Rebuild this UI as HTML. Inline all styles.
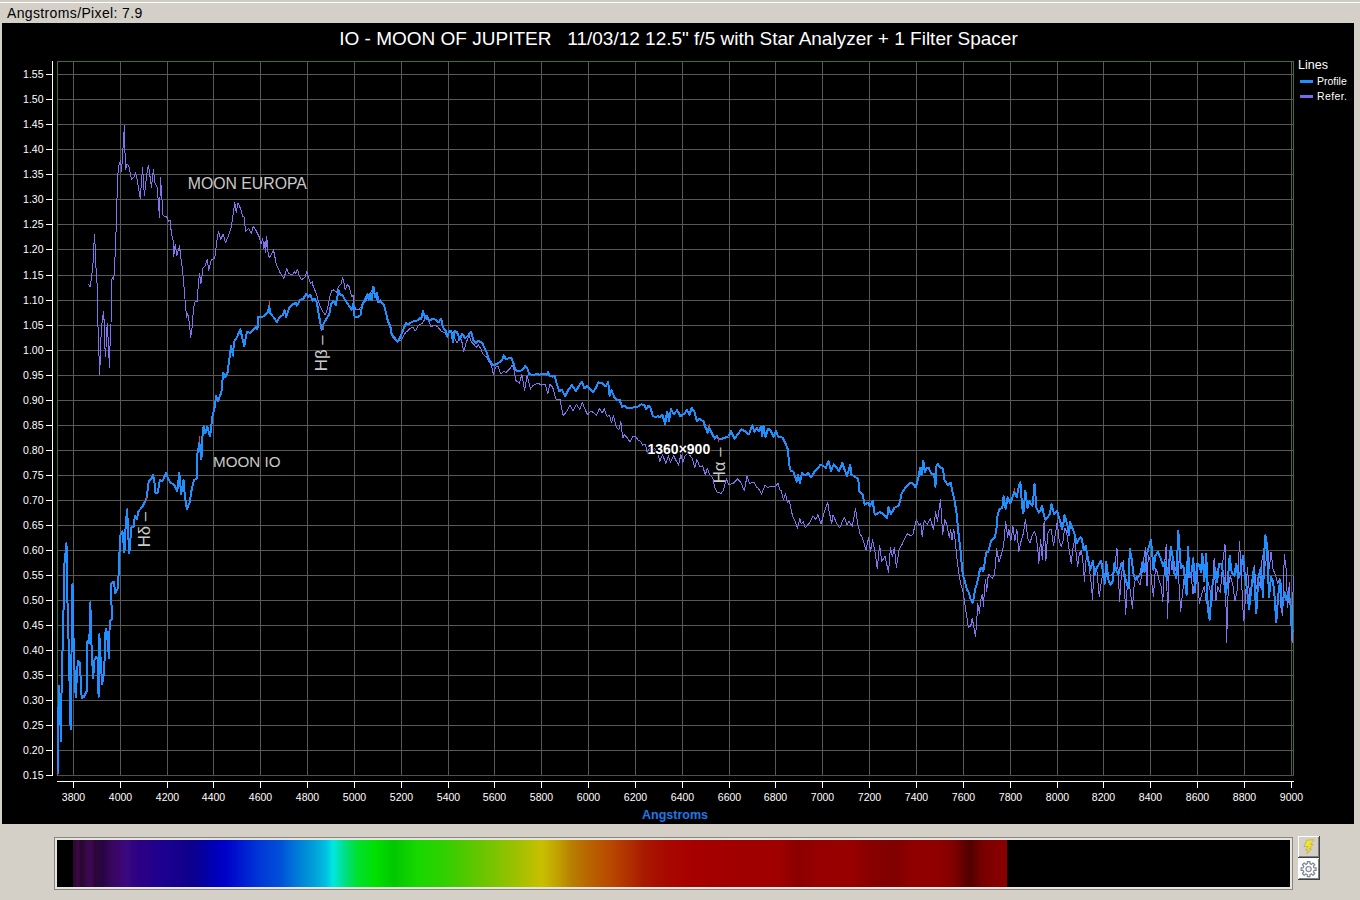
<!DOCTYPE html>
<html><head><meta charset="utf-8"><title>Spectrum</title>
<style>
html,body{margin:0;padding:0;}
body{width:1360px;height:900px;overflow:hidden;background:#d4d0c8;font-family:"Liberation Sans",sans-serif;position:relative;}
#topline{position:absolute;left:0;top:0;width:1360px;height:2px;background:#cfcbc3;}
#topwhite{position:absolute;left:0;top:2px;width:1360px;height:1px;background:#ffffff;}
#hdr{position:absolute;left:7px;top:4.5px;font-size:14px;letter-spacing:0.36px;line-height:16px;color:#000;white-space:nowrap;}
#chart{position:absolute;left:2px;top:23px;width:1352px;height:801px;background:#000;}
svg{position:absolute;left:0;top:0;}
.t{font-family:"Liberation Sans",sans-serif;fill:#fff;}
</style></head><body>
<div id="topline"></div><div id="topwhite"></div>
<div id="hdr">Angstroms/Pixel: 7.9</div>
<div id="chart"></div>
<svg width="1360" height="900" viewBox="0 0 1360 900">

<g shape-rendering="crispEdges" stroke="#585858" stroke-width="1">
<line x1="73.5" y1="61.5" x2="73.5" y2="775.5"/>
<line x1="120.5" y1="61.5" x2="120.5" y2="775.5"/>
<line x1="167.5" y1="61.5" x2="167.5" y2="775.5"/>
<line x1="213.5" y1="61.5" x2="213.5" y2="775.5"/>
<line x1="260.5" y1="61.5" x2="260.5" y2="775.5"/>
<line x1="307.5" y1="61.5" x2="307.5" y2="775.5"/>
<line x1="354.5" y1="61.5" x2="354.5" y2="775.5"/>
<line x1="401.5" y1="61.5" x2="401.5" y2="775.5"/>
<line x1="448.5" y1="61.5" x2="448.5" y2="775.5"/>
<line x1="494.5" y1="61.5" x2="494.5" y2="775.5"/>
<line x1="541.5" y1="61.5" x2="541.5" y2="775.5"/>
<line x1="588.5" y1="61.5" x2="588.5" y2="775.5"/>
<line x1="635.5" y1="61.5" x2="635.5" y2="775.5"/>
<line x1="682.5" y1="61.5" x2="682.5" y2="775.5"/>
<line x1="729.5" y1="61.5" x2="729.5" y2="775.5"/>
<line x1="775.5" y1="61.5" x2="775.5" y2="775.5"/>
<line x1="822.5" y1="61.5" x2="822.5" y2="775.5"/>
<line x1="869.5" y1="61.5" x2="869.5" y2="775.5"/>
<line x1="916.5" y1="61.5" x2="916.5" y2="775.5"/>
<line x1="963.5" y1="61.5" x2="963.5" y2="775.5"/>
<line x1="1010.5" y1="61.5" x2="1010.5" y2="775.5"/>
<line x1="1057.5" y1="61.5" x2="1057.5" y2="775.5"/>
<line x1="1103.5" y1="61.5" x2="1103.5" y2="775.5"/>
<line x1="1150.5" y1="61.5" x2="1150.5" y2="775.5"/>
<line x1="1197.5" y1="61.5" x2="1197.5" y2="775.5"/>
<line x1="1244.5" y1="61.5" x2="1244.5" y2="775.5"/>
<line x1="1291.5" y1="61.5" x2="1291.5" y2="775.5"/>
<line x1="57.5" y1="775.5" x2="1293.5" y2="775.5"/>
<line x1="57.5" y1="750.5" x2="1293.5" y2="750.5"/>
<line x1="57.5" y1="725.5" x2="1293.5" y2="725.5"/>
<line x1="57.5" y1="700.5" x2="1293.5" y2="700.5"/>
<line x1="57.5" y1="675.5" x2="1293.5" y2="675.5"/>
<line x1="57.5" y1="650.5" x2="1293.5" y2="650.5"/>
<line x1="57.5" y1="625.5" x2="1293.5" y2="625.5"/>
<line x1="57.5" y1="600.5" x2="1293.5" y2="600.5"/>
<line x1="57.5" y1="575.5" x2="1293.5" y2="575.5"/>
<line x1="57.5" y1="550.5" x2="1293.5" y2="550.5"/>
<line x1="57.5" y1="525.5" x2="1293.5" y2="525.5"/>
<line x1="57.5" y1="500.5" x2="1293.5" y2="500.5"/>
<line x1="57.5" y1="475.5" x2="1293.5" y2="475.5"/>
<line x1="57.5" y1="450.5" x2="1293.5" y2="450.5"/>
<line x1="57.5" y1="425.5" x2="1293.5" y2="425.5"/>
<line x1="57.5" y1="400.5" x2="1293.5" y2="400.5"/>
<line x1="57.5" y1="375.5" x2="1293.5" y2="375.5"/>
<line x1="57.5" y1="350.5" x2="1293.5" y2="350.5"/>
<line x1="57.5" y1="325.5" x2="1293.5" y2="325.5"/>
<line x1="57.5" y1="300.5" x2="1293.5" y2="300.5"/>
<line x1="57.5" y1="275.5" x2="1293.5" y2="275.5"/>
<line x1="57.5" y1="249.5" x2="1293.5" y2="249.5"/>
<line x1="57.5" y1="224.5" x2="1293.5" y2="224.5"/>
<line x1="57.5" y1="199.5" x2="1293.5" y2="199.5"/>
<line x1="57.5" y1="174.5" x2="1293.5" y2="174.5"/>
<line x1="57.5" y1="149.5" x2="1293.5" y2="149.5"/>
<line x1="57.5" y1="124.5" x2="1293.5" y2="124.5"/>
<line x1="57.5" y1="99.5" x2="1293.5" y2="99.5"/>
<line x1="57.5" y1="74.5" x2="1293.5" y2="74.5"/>
</g>
<rect x="57.5" y="61.5" width="1236.0" height="714.0" fill="none" stroke="#2e762e" stroke-width="1" shape-rendering="crispEdges"/>
<line x1="57.5" y1="775.5" x2="1293.5" y2="775.5" stroke="#505050" shape-rendering="crispEdges"/>
<g shape-rendering="crispEdges" stroke="#fff" stroke-width="1">
<line x1="52.5" y1="61" x2="52.5" y2="776"/>
<line x1="57" y1="781.5" x2="1294" y2="781.5"/>
<line x1="73.5" y1="781" x2="73.5" y2="788"/>
<line x1="120.5" y1="781" x2="120.5" y2="788"/>
<line x1="167.5" y1="781" x2="167.5" y2="788"/>
<line x1="213.5" y1="781" x2="213.5" y2="788"/>
<line x1="260.5" y1="781" x2="260.5" y2="788"/>
<line x1="307.5" y1="781" x2="307.5" y2="788"/>
<line x1="354.5" y1="781" x2="354.5" y2="788"/>
<line x1="401.5" y1="781" x2="401.5" y2="788"/>
<line x1="448.5" y1="781" x2="448.5" y2="788"/>
<line x1="494.5" y1="781" x2="494.5" y2="788"/>
<line x1="541.5" y1="781" x2="541.5" y2="788"/>
<line x1="588.5" y1="781" x2="588.5" y2="788"/>
<line x1="635.5" y1="781" x2="635.5" y2="788"/>
<line x1="682.5" y1="781" x2="682.5" y2="788"/>
<line x1="729.5" y1="781" x2="729.5" y2="788"/>
<line x1="775.5" y1="781" x2="775.5" y2="788"/>
<line x1="822.5" y1="781" x2="822.5" y2="788"/>
<line x1="869.5" y1="781" x2="869.5" y2="788"/>
<line x1="916.5" y1="781" x2="916.5" y2="788"/>
<line x1="963.5" y1="781" x2="963.5" y2="788"/>
<line x1="1010.5" y1="781" x2="1010.5" y2="788"/>
<line x1="1057.5" y1="781" x2="1057.5" y2="788"/>
<line x1="1103.5" y1="781" x2="1103.5" y2="788"/>
<line x1="1150.5" y1="781" x2="1150.5" y2="788"/>
<line x1="1197.5" y1="781" x2="1197.5" y2="788"/>
<line x1="1244.5" y1="781" x2="1244.5" y2="788"/>
<line x1="1291.5" y1="781" x2="1291.5" y2="788"/>
<line x1="46" y1="775.5" x2="53" y2="775.5"/>
<line x1="46" y1="750.5" x2="53" y2="750.5"/>
<line x1="46" y1="725.5" x2="53" y2="725.5"/>
<line x1="46" y1="700.5" x2="53" y2="700.5"/>
<line x1="46" y1="675.5" x2="53" y2="675.5"/>
<line x1="46" y1="650.5" x2="53" y2="650.5"/>
<line x1="46" y1="625.5" x2="53" y2="625.5"/>
<line x1="46" y1="600.5" x2="53" y2="600.5"/>
<line x1="46" y1="575.5" x2="53" y2="575.5"/>
<line x1="46" y1="550.5" x2="53" y2="550.5"/>
<line x1="46" y1="525.5" x2="53" y2="525.5"/>
<line x1="46" y1="500.5" x2="53" y2="500.5"/>
<line x1="46" y1="475.5" x2="53" y2="475.5"/>
<line x1="46" y1="450.5" x2="53" y2="450.5"/>
<line x1="46" y1="425.5" x2="53" y2="425.5"/>
<line x1="46" y1="400.5" x2="53" y2="400.5"/>
<line x1="46" y1="375.5" x2="53" y2="375.5"/>
<line x1="46" y1="350.5" x2="53" y2="350.5"/>
<line x1="46" y1="325.5" x2="53" y2="325.5"/>
<line x1="46" y1="300.5" x2="53" y2="300.5"/>
<line x1="46" y1="275.5" x2="53" y2="275.5"/>
<line x1="46" y1="249.5" x2="53" y2="249.5"/>
<line x1="46" y1="224.5" x2="53" y2="224.5"/>
<line x1="46" y1="199.5" x2="53" y2="199.5"/>
<line x1="46" y1="174.5" x2="53" y2="174.5"/>
<line x1="46" y1="149.5" x2="53" y2="149.5"/>
<line x1="46" y1="124.5" x2="53" y2="124.5"/>
<line x1="46" y1="99.5" x2="53" y2="99.5"/>
<line x1="46" y1="74.5" x2="53" y2="74.5"/>
</g>
<g class="t" font-size="10.5" text-anchor="middle">
<text x="73.5" y="801">3800</text>
<text x="120.5" y="801">4000</text>
<text x="167.5" y="801">4200</text>
<text x="213.5" y="801">4400</text>
<text x="260.5" y="801">4600</text>
<text x="307.5" y="801">4800</text>
<text x="354.5" y="801">5000</text>
<text x="401.5" y="801">5200</text>
<text x="448.5" y="801">5400</text>
<text x="494.5" y="801">5600</text>
<text x="541.5" y="801">5800</text>
<text x="588.5" y="801">6000</text>
<text x="635.5" y="801">6200</text>
<text x="682.5" y="801">6400</text>
<text x="729.5" y="801">6600</text>
<text x="775.5" y="801">6800</text>
<text x="822.5" y="801">7000</text>
<text x="869.5" y="801">7200</text>
<text x="916.5" y="801">7400</text>
<text x="963.5" y="801">7600</text>
<text x="1010.5" y="801">7800</text>
<text x="1057.5" y="801">8000</text>
<text x="1103.5" y="801">8200</text>
<text x="1150.5" y="801">8400</text>
<text x="1197.5" y="801">8600</text>
<text x="1244.5" y="801">8800</text>
<text x="1291.5" y="801">9000</text>
</g>
<g class="t" font-size="10.5" text-anchor="end">
<text x="43.5" y="779.0">0.15</text>
<text x="43.5" y="754.0">0.20</text>
<text x="43.5" y="729.0">0.25</text>
<text x="43.5" y="704.0">0.30</text>
<text x="43.5" y="679.0">0.35</text>
<text x="43.5" y="654.0">0.40</text>
<text x="43.5" y="629.0">0.45</text>
<text x="43.5" y="604.0">0.50</text>
<text x="43.5" y="579.0">0.55</text>
<text x="43.5" y="554.0">0.60</text>
<text x="43.5" y="529.0">0.65</text>
<text x="43.5" y="504.0">0.70</text>
<text x="43.5" y="479.0">0.75</text>
<text x="43.5" y="454.0">0.80</text>
<text x="43.5" y="429.0">0.85</text>
<text x="43.5" y="404.0">0.90</text>
<text x="43.5" y="379.0">0.95</text>
<text x="43.5" y="354.0">1.00</text>
<text x="43.5" y="329.0">1.05</text>
<text x="43.5" y="304.0">1.10</text>
<text x="43.5" y="279.0">1.15</text>
<text x="43.5" y="253.0">1.20</text>
<text x="43.5" y="228.0">1.25</text>
<text x="43.5" y="203.0">1.30</text>
<text x="43.5" y="178.0">1.35</text>
<text x="43.5" y="153.0">1.40</text>
<text x="43.5" y="128.0">1.45</text>
<text x="43.5" y="103.0">1.50</text>
<text x="43.5" y="78.0">1.55</text>
</g>
<text class="t" x="678.5" y="44.7" font-size="19" text-anchor="middle" xml:space="preserve" style="white-space:pre">IO - MOON OF JUPITER   11/03/12 12.5" f/5 with Star Analyzer + 1 Filter Spacer</text>
<text x="675" y="819" font-size="12.5" font-weight="bold" text-anchor="middle" fill="#1e78e6" font-family="Liberation Sans, sans-serif">Angstroms</text>
<text class="t" x="1298" y="69" font-size="12.5">Lines</text>
<rect x="1300" y="80" width="13" height="3" fill="#1e90ff"/>
<text class="t" x="1317" y="85" font-size="10.5">Profile</text>
<rect x="1300" y="95" width="13" height="3" fill="#7b68ee"/>
<text class="t" x="1317" y="100" font-size="10.5" letter-spacing="0.4">Refer.</text>
<g font-family="Liberation Sans, sans-serif" fill="#cacaca" font-size="15.5">
<text x="187.8" y="189" font-size="15.8">MOON EUROPA</text>
<text x="213" y="466.7" font-size="15.2">MOON IO</text>
<text font-size="16.8" transform="translate(326.9,371.2) rotate(-90)">H&#946; &#8211;</text>
<text font-size="16.8" transform="translate(150,547.3) rotate(-90)">H&#948; &#8211;</text>
<text font-size="16.8" transform="translate(725.3,483.3) rotate(-90)">H&#945; &#8211;</text>
</g>
<path d="M88.6,284.2 L90.3,286.9 L91.8,275.4 L93.0,263.6 L93.9,245.3 L94.5,234.2 L95.1,245.9 L95.3,264.2 L96.5,270.7 L97.3,289.5 L97.7,318.3 L98.9,350.0 L99.4,374.8 L100.4,359.5 L100.9,339.5 L101.8,324.2 L102.7,317.1 L103.6,311.2 L104.2,323.0 L104.7,344.2 L105.6,356.5 L106.5,337.1 L107.2,323.0 L107.9,334.8 L108.9,356.0 L109.5,367.7 L110.0,346.5 L111.0,325.3 L111.2,304.1 L111.5,280.1 L113.0,277.1 L113.8,279.5 L114.8,264.2 L115.7,234.2 L116.9,224.7 L117.1,180.7 L118.9,165.4 L120.6,160.9 L121.6,171.2 L123.6,138.3 L124.4,125.9 L124.9,148.9 L125.5,169.5 L127.1,163.9 L128.9,166.5 L131.5,179.3 L134.2,176.9 L135.5,172.8 L137.1,178.9 L140.2,198.6 L142.6,167.5 L144.4,195.7 L146.6,176.0 L148.4,165.1 L151.5,187.1 L153.4,169.2 L155.0,183.0 L157.2,187.1 L159.5,217.7 L160.5,177.4 L161.4,191.3 L163.1,215.9 L166.6,216.5 L168.4,221.2 L170.1,220.6 L171.5,234.2 L173.1,240.0 L173.7,256.5 L175.2,244.2 L176.9,255.4 L179.5,245.9 L180.7,256.5 L182.5,269.5 L184.0,287.2 L186.0,311.2 L186.6,317.7 L187.8,313.6 L189.2,321.8 L190.1,331.2 L190.6,337.7 L191.3,333.6 L192.5,324.2 L193.4,308.8 L194.9,301.8 L197.2,301.8 L198.4,282.4 L199.6,273.6 L201.0,283.6 L203.1,267.7 L205.5,265.4 L207.2,258.9 L208.7,270.1 L211.3,260.1 L214.3,258.3 L215.0,255.7 L216.8,241.5 L218.5,231.5 L220.7,239.8 L223.0,233.9 L225.6,242.7 L228.5,235.6 L231.5,226.2 L233.3,212.7 L234.8,202.1 L236.2,212.7 L238.0,203.3 L240.3,208.0 L242.7,216.2 L243.9,216.2 L245.6,231.5 L248.6,228.6 L251.5,233.3 L253.3,226.2 L256.2,230.9 L259.2,236.8 L260.9,243.9 L262.7,238.6 L263.9,248.6 L265.1,241.5 L265.6,252.1 L266.8,236.2 L267.4,248.6 L269.2,257.4 L271.5,254.5 L273.5,249.8 L275.1,258.0 L276.2,263.9 L278.6,269.2 L280.4,273.3 L283.9,278.6 L286.6,268.6 L288.6,273.3 L292.1,275.1 L294.5,271.6 L295.7,273.9 L297.4,269.2 L299.2,275.7 L301.6,279.8 L305.1,276.9 L306.9,271.6 L308.6,278.0 L310.4,283.4 L312.2,281.6 L313.3,286.8 L316.3,293.3 L319.2,303.9 L322.2,310.4 L325.1,315.1 L327.5,308.6 L329.8,296.8 L331.6,290.9 L334.0,289.7 L336.3,292.7 L338.7,286.2 L341.0,284.4 L342.6,277.4 L344.6,285.6 L345.1,289.7 L347.5,284.4 L349.3,286.8 L351.6,296.8 L353.2,295.6 L354.0,305.0 L355.7,309.2 L358.7,309.8 L362.2,305.6 L366.3,300.3 L369.9,293.3 L373.4,288.6 L375.0,293.2 L377.6,302.5 L380.3,299.9 L384.3,306.5 L387.6,319.7 L390.9,326.3 L392.2,334.3 L394.9,336.9 L397.5,342.2 L401.5,339.6 L405.4,332.9 L409.4,329.0 L412.7,327.0 L415.4,331.0 L418.0,325.7 L422.6,323.0 L425.3,318.4 L427.9,319.7 L431.2,327.0 L433.9,325.0 L437.2,326.3 L441.8,331.6 L445.1,332.9 L447.1,337.6 L449.1,332.9 L452.4,332.9 L454.4,338.2 L457.1,342.9 L459.7,336.9 L461.7,340.9 L463.7,351.5 L466.3,342.2 L469.0,335.6 L471.6,342.2 L474.3,344.8 L476.2,347.5 L478.2,344.8 L480.9,348.8 L482.9,354.1 L486.2,356.8 L488.8,361.4 L491.5,365.4 L493.4,374.6 L495.4,367.3 L498.1,366.0 L500.7,374.0 L504.0,371.3 L506.0,372.6 L510.0,368.7 L512.0,364.7 L514.0,370.0 L515.9,380.6 L519.3,383.2 L521.9,374.6 L524.6,390.5 L527.2,375.3 L530.5,389.2 L532.5,385.9 L537.8,383.2 L541.8,385.2 L545.1,383.9 L547.7,393.8 L550.0,384.4 L552.6,387.1 L556.0,399.0 L559.9,399.0 L561.2,405.6 L563.2,415.5 L567.2,410.9 L569.9,404.9 L573.2,410.9 L576.5,404.3 L579.8,409.6 L582.4,402.3 L585.1,409.6 L587.7,414.8 L591.0,410.9 L593.7,412.9 L596.3,415.5 L599.6,408.2 L602.3,412.9 L604.3,408.9 L606.9,416.2 L609.6,415.5 L611.5,422.8 L613.5,415.5 L616.2,426.8 L618.8,430.1 L620.8,421.5 L622.8,438.0 L624.1,434.7 L626.8,437.3 L630.1,442.0 L632.7,436.7 L635.4,436.0 L638.0,440.0 L640.7,441.3 L642.6,445.3 L645.3,444.0 L647.3,453.2 L649.3,448.0 L651.9,451.2 L654.6,448.6 L657.9,453.2 L659.8,461.2 L662.5,454.6 L665.8,463.2 L668.4,455.9 L670.4,462.5 L673.7,455.9 L675.7,459.8 L678.4,465.1 L681.0,454.6 L683.0,462.5 L685.0,455.9 L688.3,453.2 L692.3,458.5 L694.9,467.8 L696.9,459.8 L700.0,466.9 L702.6,465.6 L705.3,474.9 L707.3,468.2 L709.9,474.9 L712.6,477.5 L714.6,486.8 L717.2,492.1 L721.2,493.4 L723.2,490.7 L726.5,478.8 L728.5,484.8 L733.1,483.5 L737.7,478.8 L741.0,482.8 L744.3,490.7 L747.0,476.2 L749.6,483.5 L754.3,482.1 L756.2,486.8 L758.2,488.1 L761.5,494.0 L764.9,485.4 L767.5,487.4 L771.5,486.1 L775.4,486.8 L778.1,482.8 L779.4,489.4 L781.4,490.7 L783.4,500.0 L785.4,493.4 L787.3,502.6 L789.3,500.0 L791.3,510.6 L792.6,515.9 L795.3,521.2 L797.3,528.4 L799.9,518.5 L801.2,523.8 L803.2,521.8 L805.2,527.8 L809.8,522.5 L813.2,515.9 L815.8,519.8 L817.8,514.6 L821.1,523.8 L824.4,511.9 L827.7,502.6 L829.0,510.6 L831.7,523.8 L833.0,514.6 L836.3,522.5 L839.6,527.8 L844.3,517.2 L846.9,525.1 L848.9,521.2 L852.2,526.5 L855.5,508.6 L857.5,522.5 L860.0,533.7 L862.6,538.4 L866.0,550.3 L868.6,537.7 L870.6,551.6 L872.6,539.7 L875.2,552.9 L877.2,568.8 L879.6,545.0 L881.8,561.5 L885.1,556.2 L888.5,572.8 L890.4,547.6 L892.4,556.9 L894.4,547.6 L896.4,567.5 L899.0,550.3 L902.4,543.7 L905.0,537.7 L907.6,533.7 L910.3,535.7 L912.9,534.4 L916.2,519.8 L918.9,524.5 L920.9,523.8 L922.2,537.1 L924.2,520.5 L927.5,524.5 L930.1,518.5 L933.5,529.1 L935.7,511.9 L937.4,521.2 L940.5,500.0 L942.7,534.4 L944.7,519.8 L946.7,523.8 L949.3,537.1 L950.7,529.1 L952.0,539.7 L953.7,529.1 L955.3,541.0 L956.7,556.1 L958.9,573.9 L961.1,585.0 L963.3,592.8 L965.0,605.0 L966.7,616.1 L968.3,627.2 L970.6,626.7 L972.2,618.3 L973.9,627.2 L975.3,636.1 L976.7,625.0 L977.2,610.6 L977.8,603.9 L979.4,613.9 L980.6,600.6 L982.2,593.9 L983.6,606.1 L984.4,589.4 L985.6,579.4 L986.7,591.7 L987.8,578.3 L988.9,574.4 L992.2,578.3 L994.4,575.0 L995.6,562.8 L996.6,548.3 L999.0,562.2 L1001.6,553.6 L1003.6,546.3 L1005.6,521.2 L1007.6,537.1 L1008.9,529.1 L1010.9,541.0 L1012.9,526.5 L1014.8,541.0 L1016.8,529.1 L1018.8,551.6 L1020.8,542.3 L1023.4,533.1 L1025.4,519.8 L1028.1,539.7 L1030.0,542.7 L1032.4,535.1 L1034.1,531.5 L1035.9,535.1 L1037.7,548.0 L1038.8,563.3 L1040.6,539.8 L1042.4,559.8 L1044.1,520.9 L1045.9,561.0 L1047.7,533.9 L1049.4,529.8 L1051.2,529.8 L1053.6,545.7 L1055.9,530.4 L1057.3,520.9 L1058.9,538.6 L1061.2,546.8 L1063.0,541.0 L1064.7,528.0 L1066.5,531.5 L1068.9,548.0 L1071.2,563.3 L1073.0,548.0 L1074.8,539.8 L1076.5,556.3 L1077.7,566.9 L1079.5,552.7 L1080.0,555.5 L1081.3,550.4 L1082.8,560.7 L1084.5,581.1 L1085.7,560.7 L1087.7,555.5 L1089.6,570.9 L1091.5,586.2 L1092.5,599.6 L1093.8,573.4 L1096.6,567.0 L1099.2,596.4 L1101.1,583.6 L1103.0,572.1 L1104.9,584.9 L1106.8,572.1 L1110.0,576.0 L1112.6,573.4 L1115.1,563.2 L1117.0,548.5 L1118.3,574.7 L1119.6,601.5 L1120.9,581.1 L1123.2,560.7 L1124.7,591.3 L1125.7,614.3 L1127.0,590.0 L1128.5,578.5 L1130.4,591.3 L1132.4,608.5 L1134.3,583.6 L1136.2,576.0 L1138.1,581.1 L1140.0,584.9 L1141.9,573.4 L1143.9,558.1 L1145.5,547.9 L1147.0,586.2 L1148.3,555.5 L1150.0,559.4 L1151.5,581.1 L1153.4,596.4 L1155.4,568.3 L1157.3,572.1 L1159.2,581.1 L1161.1,586.2 L1162.8,601.5 L1164.3,568.3 L1166.2,544.7 L1167.5,618.8 L1168.8,578.5 L1170.4,555.5 L1172.0,569.6 L1173.9,560.7 L1175.8,570.9 L1177.7,553.0 L1179.0,583.6 L1180.6,611.7 L1182.2,596.4 L1184.1,578.5 L1185.0,578.3 L1187.0,570.3 L1189.0,578.3 L1191.0,573.0 L1193.0,594.3 L1195.0,578.3 L1197.0,566.3 L1199.4,603.7 L1201.7,594.3 L1204.3,586.3 L1206.3,603.7 L1208.3,582.3 L1210.3,591.7 L1212.3,601.0 L1214.1,558.3 L1215.9,601.0 L1217.7,586.3 L1220.3,593.0 L1223.0,559.7 L1225.0,543.7 L1226.6,643.0 L1228.3,586.3 L1230.3,575.7 L1233.0,586.3 L1235.0,601.0 L1237.7,587.7 L1239.4,541.7 L1241.0,565.0 L1242.6,605.0 L1243.9,621.0 L1245.7,594.3 L1247.4,567.7 L1249.0,587.7 L1250.3,599.7 L1252.3,582.3 L1254.3,565.0 L1256.3,589.0 L1258.3,578.3 L1260.3,587.7 L1262.3,555.7 L1264.3,569.0 L1266.3,559.7 L1267.9,549.0 L1269.3,569.0 L1271.0,551.7 L1273.0,569.0 L1275.7,575.7 L1277.7,583.7 L1279.7,578.3 L1281.0,607.7 L1282.6,615.7 L1284.3,554.3 L1286.1,569.0 L1287.7,607.7 L1289.3,582.3 L1291.0,626.3 L1292.1,642.3 L1293.3,575.7" fill="none" stroke="#8272f0" stroke-width="1" stroke-linejoin="round" shape-rendering="crispEdges"/>
<path d="M57.6,774.4 L58.0,730.0 L59.0,685.6 L61.1,741.1 L61.8,660.0 L63.2,643.3 L63.9,569.7 L66.4,543.3 L67.4,568.3 L67.4,598.9 L68.8,650.3 L70.6,729.3 L71.5,654.4 L72.5,584.3 L73.3,630.8 L74.3,665.0 L75.7,697.4 L77.8,660.6 L79.5,662.0 L80.6,677.2 L81.7,698.1 L84.0,696.7 L86.8,691.1 L87.5,640.6 L89.3,643.0 L90.3,602.4 L91.4,641.9 L93.1,678.6 L94.4,660.0 L95.8,657.2 L97.5,658.0 L98.6,696.7 L99.3,634.3 L100.3,653.1 L102.1,684.2 L103.5,675.8 L104.9,655.0 L105.6,628.8 L106.9,632.2 L109.0,657.9 L109.7,621.1 L111.8,619.7 L111.1,583.6 L113.9,581.5 L115.3,593.3 L118.1,587.8 L118.9,565.0 L120.3,535.8 L122.4,531.0 L124.4,552.5 L125.8,523.3 L127.2,509.4 L127.9,528.9 L129.3,553.2 L131.4,527.5 L133.5,526.8 L134.9,515.7 L136.9,519.2 L138.3,511.5 L142.5,506.7 L146.4,499.0 L148.8,481.0 L151.5,478.9 L152.9,474.7 L154.3,480.3 L155.3,492.8 L157.5,493.5 L159.9,480.3 L162.6,481.0 L166.1,472.6 L168.2,478.9 L170.3,482.4 L174.4,485.1 L177.2,491.4 L179.3,472.6 L181.1,494.2 L183.5,480.3 L184.9,496.9 L186.9,508.8 L189.7,502.5 L191.8,488.6 L193.9,480.3 L196.7,478.2 L197.4,453.9 L199.4,442.8 L201.4,459.4 L202.5,435.8 L203.6,426.1 L205.3,433.1 L207.4,426.8 L210.1,436.5 L212.2,417.8 L215.0,405.3 L216.1,396.3 L217.8,401.1 L221.3,392.8 L223.3,372.6 L225.0,377.5 L227.5,372.6 L229.6,357.4 L230.9,346.3 L233.2,355.7 L233.8,342.1 L236.8,337.4 L240.3,329.2 L244.2,346.3 L246.8,332.1 L250.3,332.7 L256.2,326.8 L257.4,329.2 L258.3,316.8 L262.7,316.8 L268.0,312.1 L269.2,305.6 L270.3,313.3 L273.3,316.8 L276.8,322.1 L279.8,316.8 L282.7,315.1 L284.5,309.8 L286.2,316.8 L289.2,308.0 L292.7,304.5 L295.7,302.7 L296.8,305.6 L300.4,299.7 L303.3,298.6 L306.3,293.9 L308.0,296.8 L310.4,295.0 L312.7,300.9 L314.5,298.6 L316.9,302.7 L319.2,316.8 L321.6,329.8 L323.4,324.5 L325.1,320.9 L329.2,314.5 L331.0,303.9 L333.4,300.9 L335.7,305.0 L338.7,290.3 L339.8,294.4 L342.2,295.0 L344.0,298.0 L351.6,309.8 L353.4,303.9 L354.6,316.8 L356.9,317.4 L360.5,315.1 L362.2,305.0 L367.5,294.4 L368.7,299.7 L370.5,294.4 L371.6,300.3 L373.4,286.8 L375.2,296.8 L377.0,292.6 L378.3,302.5 L381.0,301.8 L384.3,305.8 L388.2,322.4 L390.2,325.7 L391.5,334.3 L394.2,338.2 L397.5,341.5 L400.8,336.2 L403.5,329.0 L406.1,323.0 L408.7,324.3 L412.1,321.7 L417.3,320.4 L420.0,317.7 L421.3,319.0 L423.0,311.1 L425.0,317.7 L426.6,315.7 L429.3,321.0 L431.9,319.0 L435.9,319.7 L438.5,322.4 L441.2,319.0 L443.2,327.6 L445.8,330.9 L447.5,336.2 L449.1,331.6 L451.1,331.0 L453.1,342.2 L454.4,331.0 L457.1,332.3 L459.7,339.6 L462.3,333.6 L465.0,338.2 L468.3,335.6 L471.0,331.6 L473.6,340.9 L476.2,343.5 L478.2,340.9 L482.2,342.9 L484.8,348.8 L486.8,352.8 L488.8,359.4 L492.1,364.0 L494.1,365.4 L498.7,362.7 L502.0,360.1 L504.0,355.4 L506.0,359.4 L508.7,358.1 L511.3,358.1 L513.3,362.7 L515.3,370.0 L518.6,371.3 L522.6,370.0 L525.2,366.0 L527.2,368.0 L529.2,374.0 L533.2,375.3 L535.8,374.0 L539.1,374.6 L543.1,374.0 L546.4,374.6 L548.1,372.0 L549.7,375.9 L552.3,376.6 L554.6,375.8 L556.6,383.1 L559.3,391.0 L561.9,389.7 L565.2,396.3 L568.5,389.7 L571.8,385.1 L575.8,391.0 L579.1,385.7 L581.8,381.8 L584.4,388.4 L587.1,385.7 L589.7,388.4 L593.0,392.3 L595.7,388.4 L598.3,382.4 L602.3,383.1 L605.6,386.4 L608.2,381.8 L609.6,395.7 L611.5,390.4 L614.8,398.3 L617.5,400.3 L619.5,399.6 L622.1,406.9 L624.1,405.6 L626.8,407.6 L632.1,407.6 L637.3,406.9 L641.3,404.3 L644.6,405.6 L646.0,409.6 L648.6,405.6 L650.6,408.2 L652.6,415.5 L655.2,417.5 L657.9,416.2 L659.8,417.5 L662.5,414.8 L665.1,424.1 L667.1,411.5 L669.1,420.8 L671.1,408.9 L673.7,414.2 L677.1,410.2 L680.4,416.2 L683.7,414.2 L687.0,410.2 L689.6,414.8 L691.6,407.6 L694.3,411.5 L696.9,421.5 L699.6,418.8 L703.5,421.5 L706.2,429.4 L707.5,432.7 L708.8,426.8 L711.5,432.7 L714.8,438.7 L716.8,436.0 L718.7,438.7 L722.0,438.7 L726.0,437.3 L728.5,436.5 L731.1,431.2 L734.4,438.5 L737.7,434.5 L741.7,429.2 L745.7,431.8 L749.0,434.5 L752.3,425.2 L754.3,431.8 L756.9,427.9 L758.9,431.2 L760.9,426.5 L762.2,436.5 L763.5,426.5 L765.5,437.1 L768.2,428.5 L770.1,429.9 L773.5,436.5 L776.1,430.5 L778.1,436.5 L782.7,437.8 L786.0,444.4 L788.0,449.7 L788.9,462.9 L790.7,470.9 L793.3,471.5 L794.6,475.5 L796.6,481.5 L797.9,474.8 L799.9,482.8 L801.9,472.9 L803.9,474.8 L805.9,475.5 L807.9,472.9 L811.2,477.5 L814.5,471.5 L817.1,468.9 L820.4,464.9 L823.7,466.2 L825.7,468.2 L828.4,461.0 L831.0,470.9 L833.7,464.3 L836.3,466.9 L839.0,471.5 L842.3,462.9 L844.3,468.9 L846.9,476.2 L850.2,464.9 L851.5,474.8 L854.2,476.2 L856.2,477.5 L858.2,478.8 L859.5,491.4 L862.6,494.7 L864.6,504.6 L867.9,502.6 L869.9,506.0 L872.6,500.7 L874.6,513.2 L875.9,514.6 L879.9,511.9 L883.8,514.6 L887.1,517.9 L888.5,507.3 L891.1,513.9 L894.4,507.9 L899.0,505.3 L901.7,493.4 L905.7,487.4 L909.6,483.5 L912.3,482.8 L915.6,487.4 L918.2,478.8 L920.2,467.6 L921.5,474.9 L923.3,461.0 L924.9,472.2 L926.8,467.6 L928.8,468.2 L931.5,474.2 L934.1,473.5 L935.4,486.8 L936.5,465.6 L938.1,464.3 L940.7,468.2 L942.7,468.2 L944.7,480.8 L948.0,484.8 L950.7,482.8 L952.6,492.1 L954.6,500.7 L956.6,513.2 L958.6,534.4 L960.6,550.6 L961.7,563.9 L962.8,575.0 L965.0,581.7 L966.7,588.9 L968.9,592.8 L970.6,599.4 L972.8,602.8 L973.9,597.2 L975.0,589.4 L977.2,582.8 L978.9,575.0 L980.0,568.9 L981.7,567.8 L983.3,571.1 L985.0,560.6 L986.1,552.8 L988.4,551.6 L991.0,541.0 L995.0,537.1 L997.0,525.1 L997.6,514.6 L999.6,509.3 L1002.3,507.9 L1003.6,496.0 L1005.6,508.6 L1007.6,497.4 L1010.2,503.3 L1014.2,492.1 L1016.8,497.4 L1018.8,486.1 L1020.4,482.1 L1022.1,506.6 L1023.4,513.2 L1025.4,490.7 L1027.4,507.9 L1029.4,501.3 L1032.4,505.6 L1033.5,496.2 L1034.5,483.8 L1035.7,498.6 L1036.5,508.0 L1038.8,512.7 L1040.6,510.3 L1042.0,506.2 L1043.5,512.7 L1045.3,519.8 L1047.7,517.4 L1050.0,513.9 L1051.4,503.9 L1053.0,510.3 L1054.1,513.9 L1057.1,510.9 L1058.9,517.4 L1060.4,522.1 L1062.0,529.2 L1063.6,522.1 L1064.5,515.0 L1065.9,519.8 L1067.5,525.6 L1068.9,535.1 L1070.3,522.1 L1071.8,526.8 L1073.3,530.4 L1074.8,535.1 L1076.5,543.3 L1078.9,539.2 L1080.6,537.4 L1081.9,538.9 L1083.8,550.4 L1085.7,546.0 L1087.7,557.5 L1090.2,569.6 L1092.8,560.7 L1094.7,574.7 L1097.2,567.0 L1101.1,560.7 L1103.0,572.1 L1104.9,583.6 L1106.2,561.9 L1108.7,581.1 L1110.7,584.9 L1112.6,581.1 L1114.5,563.2 L1116.4,570.9 L1118.3,574.7 L1121.5,563.2 L1124.1,572.1 L1126.6,583.6 L1128.5,587.5 L1129.8,549.2 L1131.7,559.4 L1133.6,574.7 L1135.6,579.8 L1138.1,577.3 L1140.7,573.4 L1142.6,561.9 L1144.5,572.1 L1146.4,555.5 L1149.0,546.6 L1150.9,540.2 L1152.2,553.0 L1153.4,569.6 L1155.4,555.5 L1157.9,552.3 L1160.5,558.1 L1163.0,565.8 L1164.9,561.9 L1166.8,579.8 L1168.8,564.5 L1170.9,547.2 L1172.6,556.8 L1174.5,573.4 L1176.4,578.5 L1177.3,555.5 L1178.3,530.6 L1179.6,549.2 L1180.9,568.3 L1183.4,565.8 L1185.4,583.6 L1186.6,595.1 L1187.9,547.0 L1189.7,577.0 L1191.7,571.7 L1193.3,558.3 L1195.0,591.7 L1197.0,563.7 L1199.0,565.0 L1201.0,571.7 L1202.3,553.7 L1204.3,581.0 L1206.3,553.7 L1207.7,607.7 L1209.7,619.7 L1211.7,589.0 L1213.7,578.3 L1215.0,567.7 L1217.0,582.3 L1219.0,563.7 L1221.7,563.7 L1223.7,578.3 L1225.7,594.3 L1227.7,581.0 L1229.7,555.7 L1231.7,573.0 L1234.3,575.7 L1236.3,563.7 L1238.3,578.3 L1240.3,573.0 L1243.0,555.7 L1245.0,577.0 L1247.0,589.0 L1249.0,609.0 L1251.0,591.7 L1253.7,569.0 L1256.3,613.0 L1258.3,578.3 L1261.0,567.7 L1263.0,597.0 L1264.3,551.7 L1265.4,535.0 L1267.0,545.0 L1269.0,597.0 L1271.0,577.0 L1273.0,581.0 L1274.3,593.0 L1276.3,622.3 L1278.3,594.3 L1280.3,579.7 L1282.3,607.7 L1284.3,591.7 L1286.3,599.7 L1288.3,591.7 L1290.3,602.3 L1291.7,621.0 L1292.7,631.7" fill="none" stroke="#1e90ff" stroke-width="2" stroke-linejoin="round" shape-rendering="crispEdges"/>
<g stroke="#e23a3a" stroke-width="1.2" shape-rendering="crispEdges">
<line x1="269.5" y1="301" x2="269.5" y2="306"/>
<line x1="323.5" y1="325" x2="323.5" y2="330"/>
<line x1="199.5" y1="436" x2="199.5" y2="443"/>
<line x1="146.5" y1="496" x2="146.5" y2="501"/>
<line x1="709.5" y1="424" x2="709.5" y2="428"/>
<line x1="718.5" y1="437" x2="718.5" y2="442"/>
<line x1="1014.5" y1="488" x2="1014.5" y2="492"/>
<line x1="57.5" y1="771" x2="57.5" y2="776"/>
</g>
<text x="647.5" y="454" font-size="14" font-weight="bold" font-family="Liberation Sans, sans-serif" fill="#fff" stroke="#000" stroke-width="2" paint-order="stroke" stroke-linejoin="round">1360&#215;900</text>
<rect x="54.5" y="837.5" width="1238" height="52" fill="#e6e4de" stroke="#8a867e" stroke-width="1" shape-rendering="crispEdges"/>
<defs><linearGradient id="sp" gradientUnits="userSpaceOnUse" x1="57" y1="0" x2="1290" y2="0">
<stop offset="0.00000" stop-color="#000000"/>
<stop offset="0.01257" stop-color="#000000"/>
<stop offset="0.01314" stop-color="#2a0830"/>
<stop offset="0.01541" stop-color="#300838"/>
<stop offset="0.01703" stop-color="#420848"/>
<stop offset="0.01922" stop-color="#280630"/>
<stop offset="0.02157" stop-color="#2c0838"/>
<stop offset="0.02457" stop-color="#38084c"/>
<stop offset="0.02758" stop-color="#3e0852"/>
<stop offset="0.03114" stop-color="#2a0638"/>
<stop offset="0.03406" stop-color="#2c0640"/>
<stop offset="0.03715" stop-color="#260540"/>
<stop offset="0.04071" stop-color="#300650"/>
<stop offset="0.04428" stop-color="#380660"/>
<stop offset="0.04907" stop-color="#3a0668"/>
<stop offset="0.05385" stop-color="#3c0878"/>
<stop offset="0.05677" stop-color="#3a0a80"/>
<stop offset="0.06099" stop-color="#300480"/>
<stop offset="0.06691" stop-color="#2c0084"/>
<stop offset="0.07299" stop-color="#280088"/>
<stop offset="0.07867" stop-color="#22008c"/>
<stop offset="0.08840" stop-color="#1c0090"/>
<stop offset="0.09976" stop-color="#14008c"/>
<stop offset="0.11192" stop-color="#0a0090"/>
<stop offset="0.12814" stop-color="#0000b8"/>
<stop offset="0.13625" stop-color="#0000c8"/>
<stop offset="0.14842" stop-color="#0018d0"/>
<stop offset="0.16464" stop-color="#0038d8"/>
<stop offset="0.18086" stop-color="#0050d8"/>
<stop offset="0.19384" stop-color="#0078d8"/>
<stop offset="0.20843" stop-color="#00a0d8"/>
<stop offset="0.21817" stop-color="#00c0e0"/>
<stop offset="0.22384" stop-color="#00e8e0"/>
<stop offset="0.23236" stop-color="#00e090"/>
<stop offset="0.24331" stop-color="#00e030"/>
<stop offset="0.25791" stop-color="#00e000"/>
<stop offset="0.27332" stop-color="#00c800"/>
<stop offset="0.29246" stop-color="#18d800"/>
<stop offset="0.31387" stop-color="#30d000"/>
<stop offset="0.33090" stop-color="#50c800"/>
<stop offset="0.35280" stop-color="#78c400"/>
<stop offset="0.37388" stop-color="#a0c000"/>
<stop offset="0.39335" stop-color="#c8c000"/>
<stop offset="0.40633" stop-color="#c0a000"/>
<stop offset="0.41687" stop-color="#b88000"/>
<stop offset="0.43390" stop-color="#b86000"/>
<stop offset="0.44931" stop-color="#b84800"/>
<stop offset="0.46391" stop-color="#b03000"/>
<stop offset="0.47689" stop-color="#a81800"/>
<stop offset="0.49473" stop-color="#a80800"/>
<stop offset="0.51500" stop-color="#a80000"/>
<stop offset="0.55231" stop-color="#a00000"/>
<stop offset="0.58475" stop-color="#a00000"/>
<stop offset="0.60016" stop-color="#8c0000"/>
<stop offset="0.61963" stop-color="#980000"/>
<stop offset="0.64477" stop-color="#980000"/>
<stop offset="0.66018" stop-color="#880000"/>
<stop offset="0.67762" stop-color="#800000"/>
<stop offset="0.69505" stop-color="#900000"/>
<stop offset="0.71533" stop-color="#900000"/>
<stop offset="0.72749" stop-color="#800000"/>
<stop offset="0.74047" stop-color="#500000"/>
<stop offset="0.75020" stop-color="#780000"/>
<stop offset="0.76529" stop-color="#880000"/>
<stop offset="0.77072" stop-color="#880000"/>
<stop offset="0.77088" stop-color="#000000"/>
<stop offset="1.00000" stop-color="#000000"/>
</linearGradient></defs>
<rect x="57" y="840" width="1233" height="47" fill="url(#sp)" shape-rendering="crispEdges"/>
<g shape-rendering="crispEdges"><rect x="1298" y="836" width="22" height="22" fill="#404040"/><rect x="1298" y="836" width="21" height="21" fill="#ffffff"/><rect x="1299" y="837" width="20" height="20" fill="#808080"/><rect x="1299" y="837" width="19" height="19" fill="#d4d0c8"/></g>
<g shape-rendering="crispEdges"><rect x="1298" y="858" width="22" height="22" fill="#404040"/><rect x="1298" y="858" width="21" height="21" fill="#ffffff"/><rect x="1299" y="859" width="20" height="20" fill="#808080"/><rect x="1299" y="859" width="19" height="19" fill="#ffffff"/></g>
<polygon points="1307,840.1 1314,839.8 1310.3,844.5 1313.1,844.5 1309,849 1311.5,849 1306.8,853.8 1308,850.2 1305.7,850.2 1308.2,846.5 1303.9,846.5" fill="#f2e626" stroke="#a8a050" stroke-width="0.6"/>
<polygon points="1316.09,867.79 1316.09,870.41 1314.05,870.41 1313.37,872.03 1314.82,873.47 1312.97,875.32 1311.53,873.87 1309.91,874.55 1309.91,876.59 1307.29,876.59 1307.29,874.55 1305.67,873.87 1304.23,875.32 1302.38,873.47 1303.83,872.03 1303.15,870.41 1301.11,870.41 1301.11,867.79 1303.15,867.79 1303.83,866.17 1302.38,864.73 1304.23,862.88 1305.67,864.33 1307.29,863.65 1307.29,861.61 1309.91,861.61 1309.91,863.65 1311.53,864.33 1312.97,862.88 1314.82,864.73 1313.37,866.17 1314.05,867.79" fill="#fff" stroke="#7c8596" stroke-width="1.2" stroke-linejoin="round"/>
<circle cx="1308.6" cy="869.1" r="2.6" fill="#f4f4f4" stroke="#7c8596" stroke-width="1.1"/>
</svg>
</body></html>
